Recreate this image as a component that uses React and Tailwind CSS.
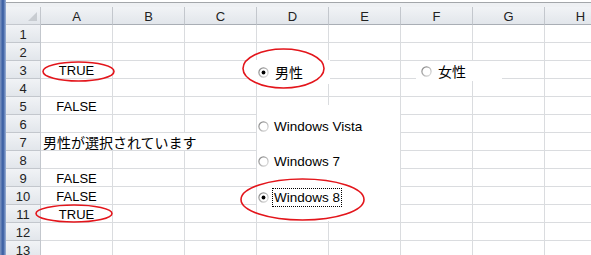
import React from "react";

const cols = ["A", "B", "C", "D", "E", "F", "G", "H"];
const rows = [1, 2, 3, 4, 5, 6, 7, 8, 9, 10, 11, 12, 13];
const colA = { 3: "TRUE", 5: "FALSE", 9: "FALSE", 10: "FALSE", 11: "TRUE" };

const cell = "h-[18px] border-r border-b border-[#dadcdf] bg-white";
const head = "h-[18px] border-r border-b border-[#c3c7cd] bg-gradient-to-b from-[#f1f3f6] to-[#e2e6eb] text-[13px] text-[#222] text-center";

function Radio({ id, checked }) {
  return (
    <svg width="11" height="11" viewBox="0 0 11 11" className="shrink-0">
      <defs>
        <linearGradient id={id} x1="0" y1="0" x2="1" y2="1">
          <stop offset="0" stopColor="#7c7c7c" />
          <stop offset="1" stopColor="#e2e2e2" />
        </linearGradient>
      </defs>
      <circle cx="5.5" cy="5.5" r="4.6" fill="#fff" stroke={`url(#${id})`} strokeWidth="1.2" />
      {checked && <circle cx="5.5" cy="5.5" r="1.9" fill="#000" />}
    </svg>
  );
}

export default function App() {
  return (
    <div className="relative w-[591px] h-[255px] overflow-hidden bg-white font-['Liberation_Sans',sans-serif]">
      <div className="flex">
        {/* window frame on the left */}
        <div className="w-[6px] h-[255px] shrink-0 bg-gradient-to-r from-[#7f96c2] via-[#34599f] to-[#9fb3d6]" />

        <div className="flex flex-col">
          <div className="h-[7px] bg-[#eef0f3] border-t-2 border-t-white">
            <div className="h-px bg-[#a3a6aa]" />
          </div>

          <div className="grid grid-cols-[35px_repeat(8,72px)]">
            {/* corner */}
            <div className="h-[18px] border-r border-b border-[#c3c7cd] bg-gradient-to-b from-[#f1f3f6] to-[#e2e6eb] flex items-end justify-end pr-[3px] pb-[3px]">
              <svg width="9" height="9" viewBox="0 0 9 9">
                <polygon points="9,0 9,9 0,9" fill="#c8ccd1" />
              </svg>
            </div>
            {cols.map((c) => (
              <div key={c} className={`${head} leading-[17px] pt-px border-b-[#a9aeb5]`}>
                {c}
              </div>
            ))}

            {rows.map((r) => (
              <React.Fragment key={r}>
                <div className={`${head} leading-[14px] pt-[3px]`}>{r}</div>
                {r === 7 ? (
                  <>
                    <div className={`${cell} col-span-3 pl-[2px] text-[14px] leading-[18px] font-['Noto_Sans_CJK_JP',sans-serif] whitespace-nowrap`}>
                      男性が選択されています
                    </div>
                    {cols.slice(3).map((c) => (
                      <div key={c} className={cell} />
                    ))}
                  </>
                ) : (
                  cols.map((c) => (
                    <div key={c} className={`${cell} text-[13px] leading-[14px] pt-[3px] text-center`}>
                      {c === "A" ? colA[r] : ""}
                    </div>
                  ))
                )}
              </React.Fragment>
            ))}
          </div>
        </div>
      </div>

      {/* option buttons: 男性 / 女性 */}
      <div className="absolute left-[248px] top-[60px] w-[82px] h-[24px] bg-white flex items-center pl-[10px] gap-[6px]">
        <Radio id="g1" checked />
        <span className="text-[14px] leading-[18px] font-['Noto_Sans_CJK_JP',sans-serif]">男性</span>
      </div>
      <div className="absolute left-[416px] top-[61px] w-[86px] h-[20px] bg-white flex items-center pl-[5px] gap-[6px]">
        <Radio id="g2" />
        <span className="text-[14px] leading-[18px] font-['Noto_Sans_CJK_JP',sans-serif]">女性</span>
      </div>

      {/* option buttons: Windows */}
      <div className="absolute left-[257px] top-[105px] w-[143px] h-[116px] bg-white flex flex-col gap-[17.5px] pt-[12px] pl-px">
        {[
          ["Windows Vista", false],
          ["Windows 7", false],
          ["Windows 8", true],
        ].map(([label, on], i) => (
          <div key={label} className="h-[18px] flex items-center gap-[3px]">
            <Radio id={`w${i}`} checked={on} />
            <span
              className={`text-[13.5px] leading-[17px] px-px border border-dotted ${on ? "border-black" : "border-transparent"}`}
            >
              {label}
            </span>
          </div>
        ))}
      </div>

      {/* red marks */}
      <svg className="absolute inset-0 pointer-events-none" width="591" height="255">
        <g fill="none" stroke="#e3151b" strokeWidth="1.6">
          <ellipse cx="78.5" cy="71.5" rx="35.5" ry="9.5" />
          <ellipse cx="74" cy="213.5" rx="38" ry="8.5" />
          <ellipse cx="283.5" cy="68.5" rx="40.5" ry="19.5" />
          <ellipse cx="302.5" cy="199.5" rx="61.5" ry="20.5" />
        </g>
      </svg>
    </div>
  );
}
